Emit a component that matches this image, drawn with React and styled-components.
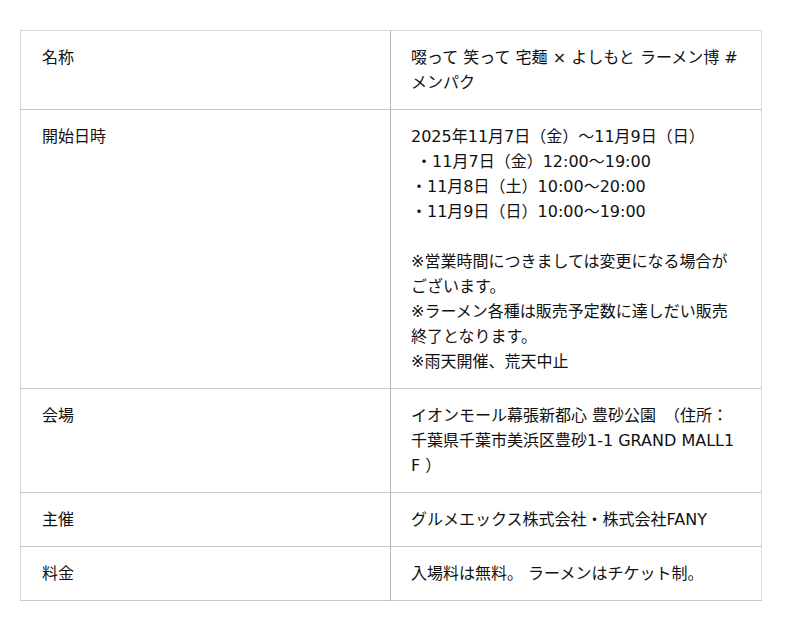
import styled, { createGlobalStyle } from "styled-components";

const GlobalStyle = createGlobalStyle`
  body {
    margin: 0;
    background: #fff;
    font-family: "DejaVu Sans", "Noto Sans CJK JP", sans-serif;
    color: #111;
  }
`;

const Wrapper = styled.div`
  padding: 30px 0 0 20px;
`;

const Table = styled.table`
  width: 742px;
  border-collapse: collapse;
  table-layout: fixed;
  border: 1px solid #d9d9d9;
`;

const Row = styled.tr`
  border-bottom: 1px solid #c8c8c8;
`;

const Head = styled.th`
  width: 328px;
  padding: 14px 20px 14px 21px;
  text-align: left;
  vertical-align: top;
  font-weight: normal;
  font-size: 16px;
  line-height: 25px;
  border-right: 1px solid #b8b8b8;
`;

const Cell = styled.td`
  padding: 14px 20px 14px 20px;
  vertical-align: top;
  font-size: 16px;
  line-height: 25px;
  white-space: pre-wrap;
  word-break: break-all;
`;

const rows = [
  { label: "名称", value: "啜って 笑って 宅麺 × よしもと ラーメン博 #メンパク" },
  {
    label: "開始日時",
    value:
      "2025年11月7日（金）〜11月9日（日）\n ・11月7日（金）12:00〜19:00\n・11月8日（土）10:00〜20:00\n・11月9日（日）10:00〜19:00\n\n※営業時間につきましては変更になる場合がございます。\n※ラーメン各種は販売予定数に達しだい販売終了となります。\n※雨天開催、荒天中止",
  },
  {
    label: "会場",
    value: "イオンモール幕張新都心 豊砂公園　（住所：千葉県千葉市美浜区豊砂1-1 GRAND MALL1F ）",
  },
  { label: "主催", value: "グルメエックス株式会社・株式会社FANY" },
  { label: "料金", value: "入場料は無料。 ラーメンはチケット制。" },
];

function App() {
  return (
    <>
      <GlobalStyle />
      <Wrapper>
        <Table>
          <tbody>
            {rows.map((r) => (
              <Row key={r.label}>
                <Head>{r.label}</Head>
                <Cell>{r.value}</Cell>
              </Row>
            ))}
          </tbody>
        </Table>
      </Wrapper>
    </>
  );
}

export default App;
